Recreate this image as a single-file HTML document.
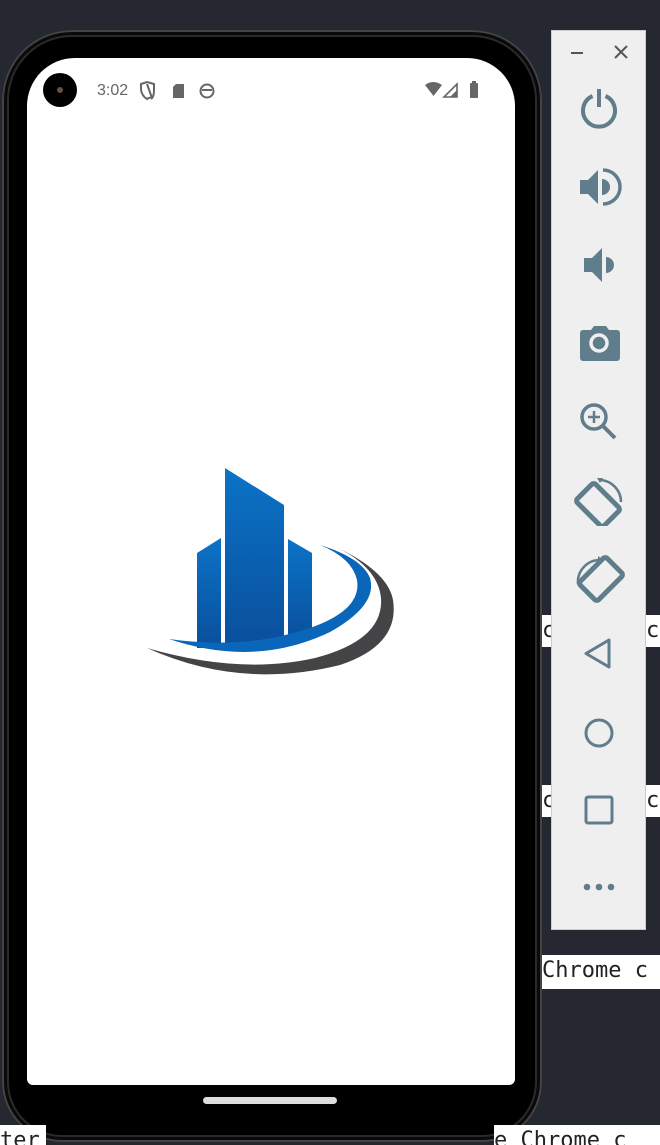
<!DOCTYPE html>
<html><head><meta charset="utf-8"><style>
html,body{margin:0;padding:0}
body{width:660px;height:1142px;background:#252830;position:relative;overflow:hidden;font-family:"Liberation Sans",sans-serif}
.tb{position:absolute;background:#fff;font-family:"DejaVu Sans Mono","Liberation Mono",monospace;font-size:22px;color:#222;line-height:32px;white-space:nowrap;overflow:hidden}
.phone{position:absolute;left:2px;top:30px;width:540px;height:1112px;border-radius:70px 70px 60px 60px;background:#000;box-shadow:inset 0 0 0 2px #444,inset 0 0 0 5px #0a0a0a,inset 0 0 0 7px #2a2a2a}
.screen{position:absolute;left:27px;top:58px;width:488px;height:1027px;background:#fff;border-radius:48px 48px 6px 6px}
.panel{position:absolute;left:551px;top:30px;width:95px;height:900px;background:#efefef;border:1px solid #ccc;box-sizing:border-box}
.panel svg{position:absolute;left:0;width:95px}
</style></head><body>
<div class="tb" style="left:542px;top:615px;width:20px;height:32px">c</div>
<div class="tb" style="left:646px;top:615px;width:14px;height:32px">c</div>
<div class="tb" style="left:542px;top:785px;width:20px;height:32px">c</div>
<div class="tb" style="left:646px;top:785px;width:14px;height:32px">c</div>
<div class="tb" style="left:542px;top:955px;width:118px;height:34px">Chrome c</div>
<div class="phone"></div>
<div class="tb" style="left:0;top:1125px;width:46px;height:20px;line-height:32px">ter</div>
<div class="tb" style="left:494px;top:1125px;width:166px;height:20px;line-height:32px">e Chrome c</div>
<div class="screen"></div>
<div style="position:absolute;left:43px;top:73px;width:34px;height:34px;border-radius:50%;background:#000"><div style="position:absolute;left:14px;top:14px;width:6px;height:6px;border-radius:50%;background:#6a5040"></div></div>
<div style="position:absolute;left:97px;top:82px;font-size:16px;color:#666">3:02</div>
<svg style="position:absolute;left:140px;top:78px" width="90" height="26" viewBox="0 0 90 26">
<path d="M7 4 L14 6 L14 12 Q14 18 12 20 L7 6" fill="none" stroke="#666" stroke-width="2"/><path d="M7 4 L1 6 L1 12 Q2 18 7 21 Q10 19 12 20" fill="none" stroke="#666" stroke-width="2"/>
<path d="M36 6 h8 v14 h-11 v-11z" fill="#666"/>
<circle cx="67" cy="13" r="6.5" fill="none" stroke="#666" stroke-width="2"/><path d="M62 11 h10 v2 h-10z" fill="#666"/>
</svg>
<svg style="position:absolute;left:424px;top:80px" width="60" height="20" viewBox="0 0 60 20">
<path d="M1 5 Q9 -1 18 5 L9.5 16z" fill="#666"/>
<path d="M33 4 L33 17 L20 17z" fill="none" stroke="#666" stroke-width="1.6"/><path d="M33 10 L33 17 L26 17z" fill="#666"/>
<rect x="46" y="3" width="8" height="15" rx="1" fill="#666"/><rect x="48" y="1" width="4" height="3" fill="#666"/>
</svg>
<div style="position:absolute;left:203px;top:1097px;width:134px;height:7px;border-radius:4px;background:#ddd"></div>
<svg style="position:absolute;left:140px;top:460px" width="260" height="220" viewBox="140 460 260 220">
<defs><linearGradient id="g" x1="0" y1="0" x2="0" y2="1"><stop offset="0" stop-color="#0b73c6"/><stop offset="1" stop-color="#0a4f9c"/></linearGradient></defs>
<path d="M225 468 L284 505 L284 648 L225 648z" fill="url(#g)"/>
<path d="M197 553 L221 538 L221 648 L197 648z" fill="url(#g)"/>
<path d="M288 539 L312 553 L312 636 L288 642z" fill="url(#g)"/>
<path d="M169 639 Q255 668 330 632 Q378 605 370 578 Q362 558 320 545 Q352 558 357 580 Q362 610 310 628 Q245 650 169 639z" fill="#0a66b8"/>
<path d="M147 648 Q240 690 340 665 Q400 645 393 600 Q388 572 338 548 Q378 568 381 598 Q384 640 315 658 Q240 675 147 648z" fill="#444446"/>
</svg>
<div class="panel">
<svg style="top:0" height="40" viewBox="0 0 95 40"><path d="M19 22 h12" stroke="#555" stroke-width="2"/><path d="M63 15 l12 12 M75 15 l-12 12" stroke="#555" stroke-width="2"/></svg>
<svg style="top:55px" height="44" viewBox="0 0 95 44"><path d="M40.5 10 A16 16 0 1 0 53.5 10" fill="none" stroke="#607d8b" stroke-width="4"/><path d="M47 3 v18" stroke="#607d8b" stroke-width="4"/></svg>
<svg style="top:135px" height="42" viewBox="0 0 95 42"><path d="M28 14 h8 l10 -10 v34 l-10 -10 h-8z" fill="#607d8b"/><path d="M50 13 a8 8 0 0 1 0 16z" fill="#607d8b"/><path d="M51 4 a17 17 0 0 1 0 34" fill="none" stroke="#607d8b" stroke-width="3.5"/></svg>
<svg style="top:213px" height="42" viewBox="0 0 95 42"><path d="M32 14 h8 l10 -10 v34 l-10 -10 h-8z" fill="#607d8b"/><path d="M54 13 a8 8 0 0 1 0 16z" fill="#607d8b"/></svg>
<svg style="top:290px" height="42" viewBox="0 0 95 42"><path d="M31 9 h8 l3 -4 h12 l3 4 h8 a3 3 0 0 1 3 3 v25 a3 3 0 0 1 -3 3 h-34 a3 3 0 0 1 -3 -3 v-25 a3 3 0 0 1 3 -3z" fill="#607d8b"/><circle cx="47" cy="22" r="8" fill="none" stroke="#efefef" stroke-width="3.5"/></svg>
<svg style="top:368px" height="44" viewBox="0 0 95 44"><circle cx="42" cy="18" r="12" fill="none" stroke="#607d8b" stroke-width="3.5"/><path d="M51 27 l12 12" stroke="#607d8b" stroke-width="4"/><path d="M42 12 v12 M36 18 h12" stroke="#607d8b" stroke-width="2.5"/></svg>
<svg style="top:445px" height="50" viewBox="0 0 95 50"><rect x="33" y="10" width="26" height="38" rx="3" transform="rotate(-45 46 29)" fill="none" stroke="#607d8b" stroke-width="5"/><path d="M47 4 A22 22 0 0 1 69 26" fill="none" stroke="#607d8b" stroke-width="2.5"/><path d="M45 2 l6 0 -3 5z" fill="#607d8b"/></svg>
<svg style="top:523px" height="50" viewBox="0 0 95 50"><rect x="36" y="6" width="26" height="38" rx="3" transform="rotate(45 49 25)" fill="none" stroke="#607d8b" stroke-width="5"/><path d="M26 30 A22 22 0 0 1 48 6" fill="none" stroke="#607d8b" stroke-width="2.5"/><path d="M46 2 l5 4 -5 3z" fill="#607d8b"/></svg>
<svg style="top:605px" height="36" viewBox="0 0 95 36"><path d="M57 4 L34 17.5 L57 31z" fill="none" stroke="#607d8b" stroke-width="3" stroke-linejoin="round"/></svg>
<svg style="top:684px" height="36" viewBox="0 0 95 36"><circle cx="47" cy="18" r="13" fill="none" stroke="#607d8b" stroke-width="3"/></svg>
<svg style="top:762px" height="36" viewBox="0 0 95 36"><rect x="34" y="4" width="26" height="26" rx="2" fill="none" stroke="#607d8b" stroke-width="3"/></svg>
<svg style="top:846px" height="20" viewBox="0 0 95 20"><circle cx="35" cy="10" r="3.3" fill="#607d8b"/><circle cx="47" cy="10" r="3.3" fill="#607d8b"/><circle cx="59" cy="10" r="3.3" fill="#607d8b"/></svg>
</div>
</body></html>
